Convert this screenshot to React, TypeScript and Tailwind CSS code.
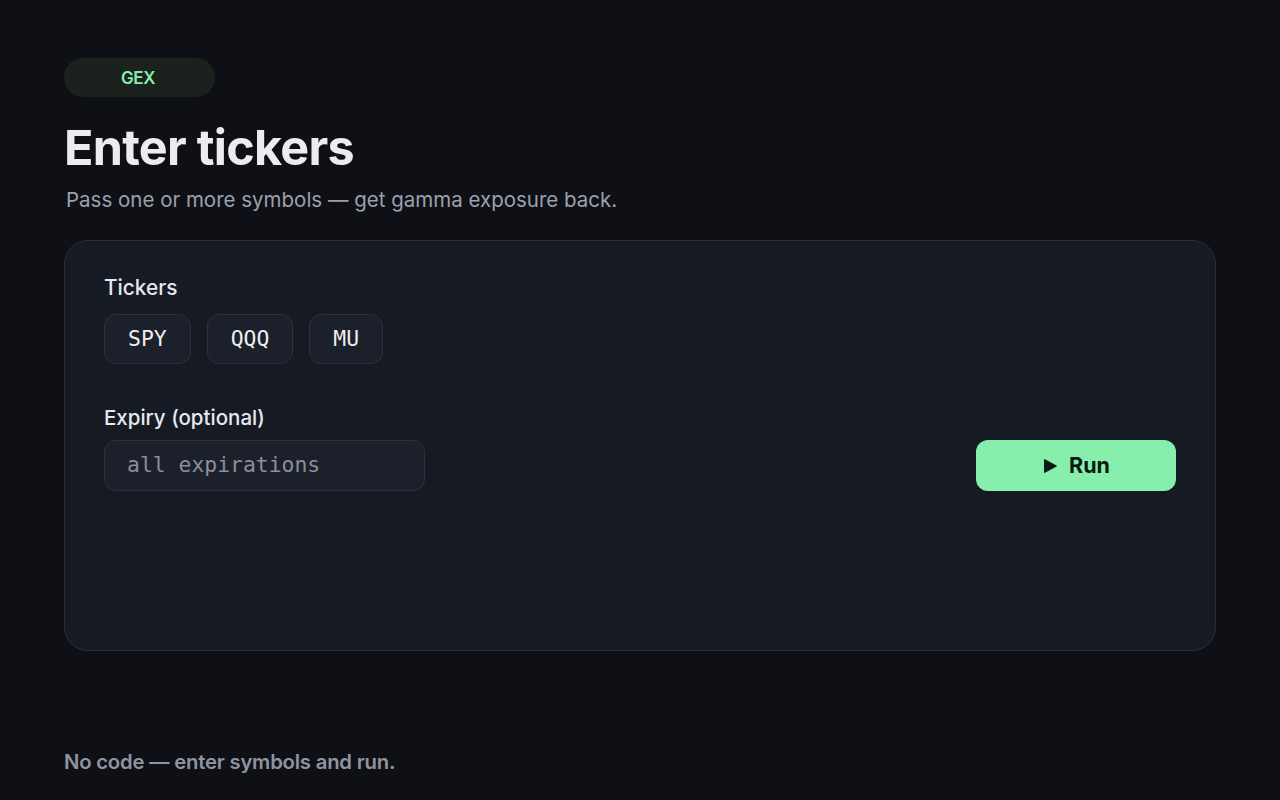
import React from 'react';

const tickers = ['SPY', 'QQQ', 'MU'];

const App = () => {
  return (
    <div
      className="w-[1280px] h-[800px] bg-[#0e1015] text-[#e5e7eb] px-16 pt-[58px] flex flex-col"
      style={{ fontFamily: 'Inter, "Noto Sans", sans-serif' }}
    >
      <div className="w-[151px] h-[39px] rounded-full bg-[#1b221e] flex items-center justify-center pr-[3px] pt-[2px] text-[#86efac] text-[17px] font-semibold tracking-tight">
        GEX
      </div>

      <h1 className="mt-[23px] text-[48.5px] leading-[56px] font-bold tracking-[-0.015em] text-[#ebecf0]">
        Enter tickers
      </h1>
      <p className="mt-[10px] ml-[2px] text-[20.5px] leading-[28px] text-[#9ca0ad]">
        Pass one or more symbols — get gamma exposure back.
      </p>

      <div className="mt-[26px] h-[411px] rounded-[24px] border border-[#2a2f3b] bg-[#161a23] px-[39px] pt-[33px] flex flex-col">
        <div className="text-[20.8px] leading-[28px] font-medium text-[#e6e8ee]">Tickers</div>
        <div className="mt-[12px] flex gap-4">
          {tickers.map((t) => (
            <div
              key={t}
              className="h-[50px] px-[23px] rounded-[12px] border border-[#2c313d] bg-[#1c202a] flex items-center text-[21.4px] text-[#eceef3]"
              style={{ fontFamily: '"DejaVu Sans Mono", monospace' }}
            >
              {t}
            </div>
          ))}
        </div>

        <div className="mt-[40px] text-[20.5px] leading-[28px] font-medium text-[#e6e8ee]">Expiry (optional)</div>
        <div className="mt-[8px] flex items-center justify-between">
          <div
            className="w-[321px] h-[51px] rounded-[12px] border border-[#2c313d] bg-[#1c202a] flex items-center pl-[22px] text-[21.4px] text-[#8a8f9b]"
            style={{ fontFamily: '"DejaVu Sans Mono", monospace' }}
          >
            all expirations
          </div>
          <button className="w-[200px] h-[51px] rounded-[12px] bg-[#86efac] flex items-center justify-center gap-[11px] text-[21.5px] font-bold text-[#0a1a10]">
            <svg width="16" height="16" viewBox="0 0 16 16">
              <path d="M2.5 1.5 L14.5 8 L2.5 14.5 Z" fill="#0a1a10" strokeLinejoin="round" stroke="#0a1a10" strokeWidth="1" />
            </svg>
            Run
          </button>
        </div>
      </div>

      <div className="mt-auto mb-[24px] text-[20.3px] leading-[28px] font-semibold text-[#8f94a1] tracking-[-0.01em]">
        No code — enter symbols and run.
      </div>
    </div>
  );
};

export default App;
